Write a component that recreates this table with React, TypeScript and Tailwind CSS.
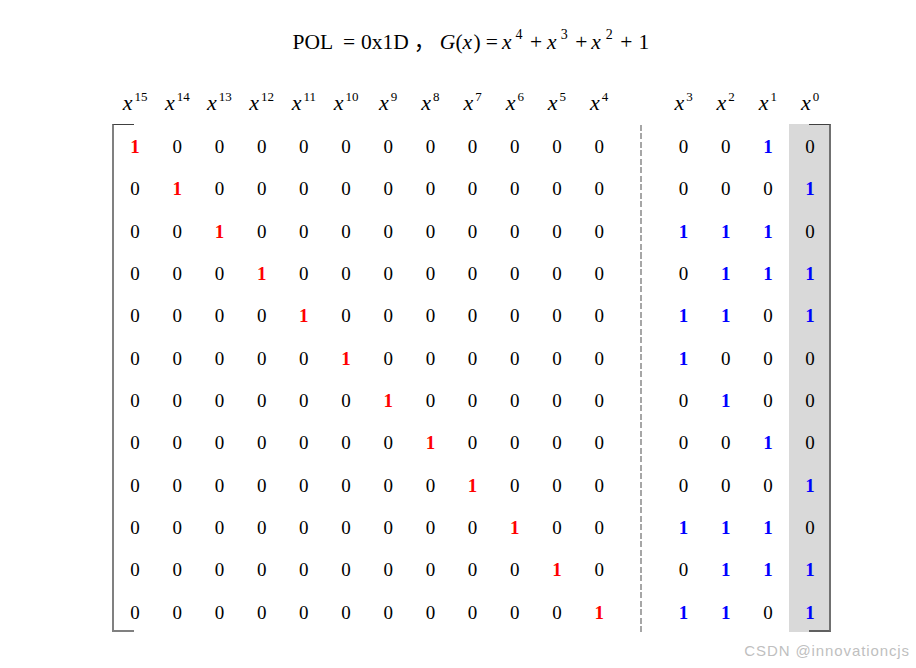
import React from "react";

const right = [
  [0, 0, 1, 0],
  [0, 0, 0, 1],
  [1, 1, 1, 0],
  [0, 1, 1, 1],
  [1, 1, 0, 1],
  [1, 0, 0, 0],
  [0, 1, 0, 0],
  [0, 0, 1, 0],
  [0, 0, 0, 1],
  [1, 1, 1, 0],
  [0, 1, 1, 1],
  [1, 1, 0, 1],
];

const leftExp = [15, 14, 13, 12, 11, 10, 9, 8, 7, 6, 5, 4];
const rightExp = [3, 2, 1, 0];

function Pow({ e }: { e: number }) {
  return (
    <div className="flex h-[22px] items-baseline justify-center leading-[22px]">
      <span className="text-[22px] italic">x</span>
      <span className="relative -top-[9.5px] ml-[2px] text-[13px] leading-[22px]">{e}</span>
    </div>
  );
}

function Cell({ v, color, gray }: { v: number; color: "red" | "blue"; gray?: boolean }) {
  const one = v === 1;
  return (
    <div
      className={
        "flex items-center justify-center pt-[3px] text-[19px] leading-none " +
        (gray ? "bg-[#d9d9d9] " : "")
      }
    >
      {one ? (
        <span className={"font-bold " + (color === "red" ? "text-[#ff0000]" : "text-[#0000ff]")}>1</span>
      ) : (
        <span className="text-black">0</span>
      )}
    </div>
  );
}

export default function App() {
  return (
    <div className="relative flex h-[668px] w-[916px] flex-col bg-white font-['Liberation_Serif','Noto_Sans_CJK_SC',serif] text-black">
      {/* Title */}
      <div className="mt-[29px] flex h-[22px] items-baseline whitespace-pre pl-[292.5px] text-[21.5px] leading-[21.5px]">
        <span>POL</span>
        <span className="ml-[9.9px]">=</span>
        <span className="ml-[5.9px]">0x1D</span>
        <span className="ml-[5px] font-['Noto_Sans_CJK_SC',sans-serif] leading-[21.5px]">，</span>
        <span className="ml-[4.5px] italic">G</span>
        <span>(</span>
        <span className="italic">x</span>
        <span className="ml-[1.5px]">)</span>
        <span className="ml-[5px]">=</span>
        <span className="ml-[4px] italic">x</span>
        <span className="relative -top-[10px] ml-[4px] text-[14px]">4</span>
        <span className="ml-[7.5px]">+</span>
        <span className="ml-[5px] italic">x</span>
        <span className="relative -top-[10px] ml-[4px] text-[14px]">3</span>
        <span className="ml-[7.5px]">+</span>
        <span className="ml-[4px] italic">x</span>
        <span className="relative -top-[10px] ml-[5px] text-[14px]">2</span>
        <span className="ml-[7.5px]">+</span>
        <span className="ml-[6px]">1</span>
      </div>

      {/* Header */}
      <div className="ml-[114px] mt-[41px] grid grid-cols-[repeat(17,42.19px)]">
        {leftExp.map((e) => (
          <Pow key={e} e={e} />
        ))}
        <div />
        {rightExp.map((e) => (
          <Pow key={e} e={e} />
        ))}
      </div>

      {/* Matrix */}
      <div className="relative ml-[112px] mt-[10px] h-[508px] w-[720px] pl-[2px]">
        <div className="absolute left-0 top-0 h-[508px] w-[22px] border-b-2 border-l-2 border-t border-b-[#808080] border-l-[#808080] border-t-[#404040]" />
        <div className="grid h-[508px] grid-cols-[repeat(17,42.19px)] grid-rows-[repeat(12,42.33px)]">
          <div className="col-start-13 row-span-12 row-start-1 flex justify-center pt-[1px]">
            <div className="h-full w-[2px] bg-[repeating-linear-gradient(to_bottom,#a6a6a6_0px,#a6a6a6_6px,transparent_6px,transparent_8.5px)]" />
          </div>
          {right.map((r, i) => (
            <React.Fragment key={i}>
              {leftExp.map((_, j) => (
                <Cell key={"l" + j} v={i === j ? 1 : 0} color="red" />
              ))}
              {r.map((v, j) => (
                <Cell key={"r" + j} v={v} color="blue" gray={j === 3} />
              ))}
            </React.Fragment>
          ))}
        </div>
        <div className="absolute right-[1px] top-0 h-[508px] w-[22px] border-b-2 border-r-2 border-t border-b-[#606060] border-r-[#707070] border-t-[#404040]" />
      </div>

      {/* Watermark */}
      <div className="mt-[11px] flex justify-end pr-[6px] font-['Liberation_Sans',Arial,sans-serif] text-[15px] leading-[16px] tracking-[0.9px] text-[#bfbfbf]">
        CSDN @innovationcjs
      </div>
    </div>
  );
}
